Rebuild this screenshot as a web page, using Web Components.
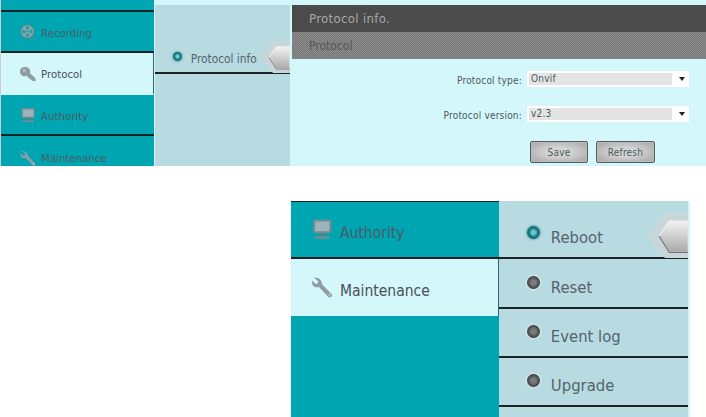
<!DOCTYPE html>
<html>
<head>
<meta charset="utf-8">
<title>Protocol</title>
<style>
html, body { margin: 0; padding: 0; background: #fff; }
body { width: 706px; height: 417px; overflow: hidden; font-family: "DejaVu Sans Condensed", "DejaVu Sans", sans-serif; }
</style>
</head>
<body>
<camera-page></camera-page>

<script>
const ICONS = {
    reel: `<svg viewBox="0 0 22 22"><circle cx="10" cy="10" r="9" fill="#86a4a9" stroke="#5f7f86" stroke-width="1.2"/>
        <circle cx="10" cy="5.2" r="2.1" fill="#00a5b2"/><circle cx="10" cy="14.8" r="2.1" fill="#00a5b2"/>
        <circle cx="5.2" cy="10" r="2.1" fill="#00a5b2"/><circle cx="14.8" cy="10" r="2.1" fill="#00a5b2"/>
        <circle cx="10" cy="10" r="1" fill="#4f6f76"/><path d="M13 19h8" stroke="#6d8a90" stroke-width="1.6"/></svg>`,
    key: `<svg viewBox="0 0 22 22"><path d="M7.5 1.5a6.2 6.2 0 0 1 5.9 8.2l7.4 6.8v3.6l-3.4.4-1.8-2-1.2.2-.6-1.8-1.6-.2-3.4-3.7A6.2 6.2 0 1 1 7.5 1.5z" fill="#8f9da2"/>
        <circle cx="5.6" cy="6" r="1.7" fill="#c3cdd0"/></svg>`,
    monitor: `<svg viewBox="0 0 22 22"><rect x="2" y="1.5" width="18" height="13.5" rx="1.5" fill="#6f8d94"/>
        <rect x="4" y="3.4" width="14" height="9.6" fill="#9db4b9"/><path d="M8 15h6v2.4H8z" fill="#5f7b82"/>
        <path d="M3.5 18h15v2.4h-15z" fill="#6f8d94"/></svg>`,
    wrench: `<svg viewBox="0 0 22 22"><path d="M3 1.6 7 5.2l-.4 2.2-2.2.5L1 4.4C.3 7.4 1.6 10.4 5 11c1 .2 2 0 2.8-.2l9.4 10c1 .9 3.7-.8 3.4-2.8l-9.8-10C11 4.6 7.4 1 3 1.6z" fill="#8f9da2"/>
        <circle cx="18.2" cy="18.4" r="1" fill="#d0d8da"/></svg>`
};

class NavItem extends HTMLElement {
    constructor() {
        super();
        this.attachShadow({mode: 'open'});
    }
    connectedCallback() {
        this.shadowRoot.innerHTML = `
            <style>
            :host {
                display: flex;
                flex: none;
                align-items: center;
                box-sizing: border-box;
                height: var(--nav-row);
                padding: var(--nav-shift) 0 0 var(--nav-pad);
                color: #4c5c64;
                font-size: var(--nav-font);
                border-bottom: var(--nav-line) solid #1a2226;
            }
            :host([active]) {
                background-color: #d3f7fa;
                color: #4a5058;
                border-bottom-color: #d3f7fa;
                border-right: 1px solid #2c6770;
            }
            :host([last]) { border-bottom: none; }
            .icon { width: 1.45em; height: 1.45em; margin-right: .42em; flex: none; }
            .icon svg { display: block; width: 100%; height: 100%; }
            .text { padding-top: var(--nav-text-drop); }
            </style>
            <span class="icon">${ICONS[this.getAttribute('icon')]}</span>
            <span class="text"><slot></slot></span>`;
    }
}
customElements.define('nav-item', NavItem);

class NavMenu extends HTMLElement {
    constructor() {
        super();
        this.attachShadow({mode: 'open'});
        this.shadowRoot.innerHTML = `
            <style>
            :host {
                display: flex;
                flex-direction: column;
                flex: none;
                width: var(--nav-width);
                background-color: #00a5b2;
                overflow: hidden;
            }
            </style>
            <slot></slot>`;
    }
}
customElements.define('nav-menu', NavMenu);

class SubItem extends HTMLElement {
    constructor() {
        super();
        this.attachShadow({mode: 'open'});
    }
    connectedCallback() {
        this.shadowRoot.innerHTML = `
            <style>
            :host {
                display: flex;
                flex: none;
                align-items: flex-end;
                position: relative;
                box-sizing: border-box;
                height: var(--sub-row);
                padding: 0 0 var(--sub-bottom) var(--sub-pad);
                color: #56626c;
                font-size: var(--sub-font);
                border-bottom: var(--nav-line) solid #1a2226;
            }
            :host([tall]) { height: var(--sub-first); }
            :host([wide]) { height: calc(var(--sub-row) + 1px); }
            .led {
                flex: none;
                width: .78em;
                height: .78em;
                margin: 0 var(--led-gap) var(--led-lift) 0;
                border-radius: 50%;
                background: radial-gradient(circle, #7b7b7b 0 25%, #3c3c3c 70%);
                box-shadow: 0 0 2px 1px rgba(255,255,255,.45);
            }
            :host([active]) .led {
                background: radial-gradient(circle, #7cc4cc 0 20%, #11828f 45%, #0e4f5a 85%);
                box-shadow: 0 0 2px 1px rgba(40,110,120,.4);
            }
            .pointer {
                display: none;
                position: absolute;
                right: 0;
                bottom: -1px;
                width: 2.45em;
                height: 2.75em;
            }
            :host([active]) .pointer { display: block; }
            .pointer svg { display: block; width: 100%; height: 100%; }
            </style>
            <span class="led"></span>
            <slot></slot>
            <span class="pointer">
                <svg viewBox="0 0 40 45" preserveAspectRatio="none">
                    <defs><linearGradient id="p" x1="0" y1="0" x2="0" y2="1">
                        <stop offset="0" stop-color="#f2f2f2"/><stop offset="1" stop-color="#a9a9a9"/>
                    </linearGradient></defs>
                    <path d="M0 23 17 0h23v45H17z" fill="#c9d6d8"/>
                    <path d="M11 23 21 8h19v31H21z" fill="url(#p)" stroke="#e9eeee" stroke-width="1.4"/>
                    <path d="M11 23 21 39h19" fill="none" stroke="#6d7478" stroke-width="1.2"/>
                </svg>
            </span>`;
    }
}
customElements.define('sub-item', SubItem);

class SubMenu extends HTMLElement {
    constructor() {
        super();
        this.attachShadow({mode: 'open'});
        this.shadowRoot.innerHTML = `
            <style>
            :host {
                display: flex;
                flex-direction: column;
                flex: none;
                width: var(--sub-width);
                background-color: #b7dbe1;
            }
            </style>
            <slot></slot>`;
    }
}
customElements.define('sub-menu', SubMenu);

class SelectRow extends HTMLElement {
    constructor() {
        super();
        this.attachShadow({mode: 'open'});
    }
    connectedCallback() {
        this.shadowRoot.innerHTML = `
            <style>
            :host {
                display: flex;
                align-items: center;
                justify-content: flex-end;
                height: 16px;
                font-size: 10px;
                letter-spacing: .2px;
                color: #4d5a62;
            }
            .label { margin-right: 5px; padding-top: 2px; }
            .box {
                display: flex;
                align-items: center;
                box-sizing: border-box;
                width: 162px;
                height: 16px;
                padding: 2px 0 2px 2px;
                background-color: #fff;
            }
            .value {
                box-sizing: border-box;
                width: 143px;
                height: 12px;
                line-height: 12px;
                padding-left: 2px;
                background-color: #e4e4e4;
            }
            .arrow {
                width: 0;
                height: 0;
                margin-left: 7px;
                border: 3px solid transparent;
                border-top: 4px solid #222;
                border-bottom: none;
            }
            </style>
            <span class="label">${this.getAttribute('label')}</span>
            <div class="box"><div class="value">${this.getAttribute('value')}</div><span class="arrow"></span></div>`;
    }
}
customElements.define('select-row', SelectRow);

class GrayButton extends HTMLElement {
    constructor() {
        super();
        this.attachShadow({mode: 'open'});
        this.shadowRoot.innerHTML = `
            <style>
            :host {
                display: flex;
                align-items: center;
                justify-content: center;
                box-sizing: border-box;
                height: 22px;
                font-size: 10px;
                letter-spacing: .2px;
                color: #4d5a62;
                border: 1px solid #55595b;
                border-radius: 2px;
                background: radial-gradient(ellipse at center, #d4d4d4 30%, #a4a4a4 100%);
                box-shadow: inset 0 0 0 1px #bcbcbc;
            }
            </style>
            <slot></slot>`;
    }
}
customElements.define('gray-button', GrayButton);

class InfoPanel extends HTMLElement {
    constructor() {
        super();
        this.attachShadow({mode: 'open'});
        this.shadowRoot.innerHTML = `
            <style>
            :host {
                display: flex;
                flex-direction: column;
                flex: 1;
                padding: 5px 0 0 2px;
                min-width: 0;
            }
            .title, .subtitle {
                display: flex;
                align-items: center;
                box-sizing: border-box;
                height: 27px;
                padding-left: 17px;
                background-size: 2px 2px;
            }
            .title {
                font-size: 13px;
                letter-spacing: .35px;
                color: #a8a8a8;
                background-color: #4a4a4a;
                background-image: repeating-conic-gradient(#444 0 25%, #525252 0 50%);
            }
            .subtitle {
                font-size: 12px;
                color: #555;
                background-color: #808080;
                background-image: repeating-conic-gradient(#777 0 25%, #8c8c8c 0 50%);
            }
            .form {
                display: flex;
                flex-direction: column;
                gap: 19px;
                padding: 12px 17px 0 0;
            }
            .actions {
                display: grid;
                grid-template-columns: 58px 59px;
                gap: 8px;
                justify-content: start;
                margin: 0 0 0 238px;
            }
            </style>
            <div class="title"><slot name="title"></slot></div>
            <div class="subtitle"><slot name="subtitle"></slot></div>
            <div class="form">
                <slot name="rows"></slot>
                <div class="actions"><slot name="actions"></slot></div>
            </div>`;
    }
}
customElements.define('info-panel', InfoPanel);

class CameraPage extends HTMLElement {
    constructor() {
        super();
        this.attachShadow({mode: 'open'});
        this.shadowRoot.innerHTML = `
            <style>
            :host { display: block; }
            .frame { display: flex; overflow: hidden; }
            .top {
                height: 166px;
                padding-left: 1px;
                --nav-font: 11.3px;
                --sub-font: 11.8px;
                --nav-width: 153px;
                --nav-row: 41.5px;
                --nav-pad: 19px;
                --nav-line: 2px;
                --nav-shift: 2px;
                --nav-text-drop: 2px;
                --sub-width: 135px;
                --sub-row: 69px;
                --sub-first: 69px;
                --sub-bottom: 6px;
                --sub-pad: 18px;
                --led-gap: 8.5px;
                --led-lift: 5px;
                background: linear-gradient(#ccc, #ccc) left / 1px 100% no-repeat, #d3f7fa;
            }
            .top sub-menu { margin: 5px 0 0 1px; }
            .bottom {
                height: 216px;
                margin: 35px 0 0 291px;
                --nav-font: 15.5px;
                --sub-font: 16.5px;
                --nav-width: 208px;
                --nav-row: 57px;
                --nav-pad: 20px;
                --nav-line: 2px;
                --nav-shift: 0px;
                --nav-text-drop: 7px;
                --sub-width: 189px;
                --sub-row: 49px;
                --sub-first: 58px;
                --sub-bottom: 10px;
                --sub-pad: 28px;
                --led-gap: 11px;
                --led-lift: 8px;
            }
            .bottom nav-menu { border-top: 1px solid #1a2226; }
            .bottom-edge { width: 2px; background-color: #d3f7fa; }
            .spacer { flex: none; height: 11.5px; box-sizing: border-box; border-bottom: 2px solid #1a2226; }
            </style>
            <div class="frame top">
                <nav-menu>
                    <div class="spacer"></div>
                    <nav-item icon="reel">Recording</nav-item>
                    <nav-item icon="key" active>Protocol</nav-item>
                    <nav-item icon="monitor">Authority</nav-item>
                    <nav-item icon="wrench" last>Maintenance</nav-item>
                </nav-menu>
                <sub-menu>
                    <sub-item active>Protocol info</sub-item>
                </sub-menu>
                <info-panel>
                    <span slot="title">Protocol info.</span>
                    <span slot="subtitle">Protocol</span>
                    <select-row slot="rows" label="Protocol type:" value="Onvif"></select-row>
                    <select-row slot="rows" label="Protocol version:" value="v2.3"></select-row>
                    <gray-button slot="actions">Save</gray-button>
                    <gray-button slot="actions">Refresh</gray-button>
                </info-panel>
            </div>
            <div class="frame bottom">
                <nav-menu>
                    <nav-item icon="monitor">Authority</nav-item>
                    <nav-item icon="wrench" active last>Maintenance</nav-item>
                </nav-menu>
                <sub-menu>
                    <sub-item active tall>Reboot</sub-item>
                    <sub-item wide>Reset</sub-item>
                    <sub-item>Event log</sub-item>
                    <sub-item>Upgrade</sub-item>
                </sub-menu>
                <div class="bottom-edge"></div>
            </div>`;
    }
}
customElements.define('camera-page', CameraPage);
</script>
</body>
</html>
